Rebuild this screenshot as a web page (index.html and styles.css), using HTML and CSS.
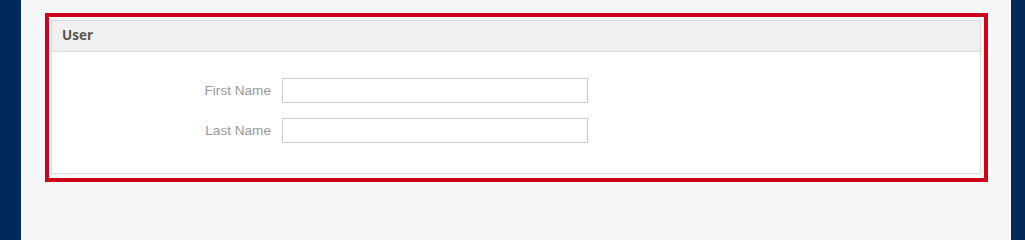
FILE: index.html
```html
<!DOCTYPE html>
<html lang="en">
<head>
<meta charset="utf-8">
<title>User</title>
<link rel="stylesheet" href="styles.css">
</head>
<body>
<div class="nav-left"></div>
<main class="main">
  <div class="highlight">
    <section class="panel">
      <div class="panel-header">User</div>
      <div class="panel-body">
        <div class="form-row">
          <label class="form-label" for="first">First Name</label>
          <input class="form-input" id="first" type="text">
        </div>
        <div class="form-row">
          <label class="form-label" for="last">Last Name</label>
          <input class="form-input" id="last" type="text">
        </div>
      </div>
    </section>
  </div>
</main>
<div class="nav-right"></div>
</body>
</html>
```
FILE: styles.css
```css
html {
  background: #f7f7f7;
}
html, body {
  margin: 0;
  padding: 0;
}
body {
  display: flex;
  min-height: 100vh;
  background: #f7f7f7;
  font-family: "Liberation Sans", Arial, sans-serif;
}
.nav-left {
  width: 21px;
  flex-shrink: 0;
  background: #002a5c;
}
.nav-right {
  width: 14px;
  flex-shrink: 0;
  background: #002a5c;
}
.main {
  flex: 1;
  padding: 13px 23px 0 24px;
}
.highlight {
  border: 4px solid #d0021b;
  padding: 3px 3px 4px 2px;
}
.panel {
  border: 1px solid #dddddd;
  background: #ffffff;
}
.panel-header {
  height: 31px;
  line-height: 28px;
  padding: 0 10px 2px;
  box-sizing: border-box;
  background: #f0f0f0;
  border-bottom: 1px solid #dddddd;
  font-weight: bold;
  font-size: 13.5px;
  color: #555555;
  font-family: "Open Sans", "Liberation Sans", sans-serif;
}
.panel-body {
  padding: 26px 0 30px;
  display: flex;
  flex-direction: column;
  gap: 15px;
}
.form-row {
  display: grid;
  grid-template-columns: 219px 306px;
  column-gap: 11px;
  align-items: center;
}
.form-label {
  text-align: right;
  font-size: 13.6px;
  color: #999999;
}
.form-input {
  box-sizing: border-box;
  width: 306px;
  height: 25px;
  margin: 0;
  border: 1px solid #cccccc;
  background: #ffffff;
  padding: 2px 6px;
  outline: none;
}
```
